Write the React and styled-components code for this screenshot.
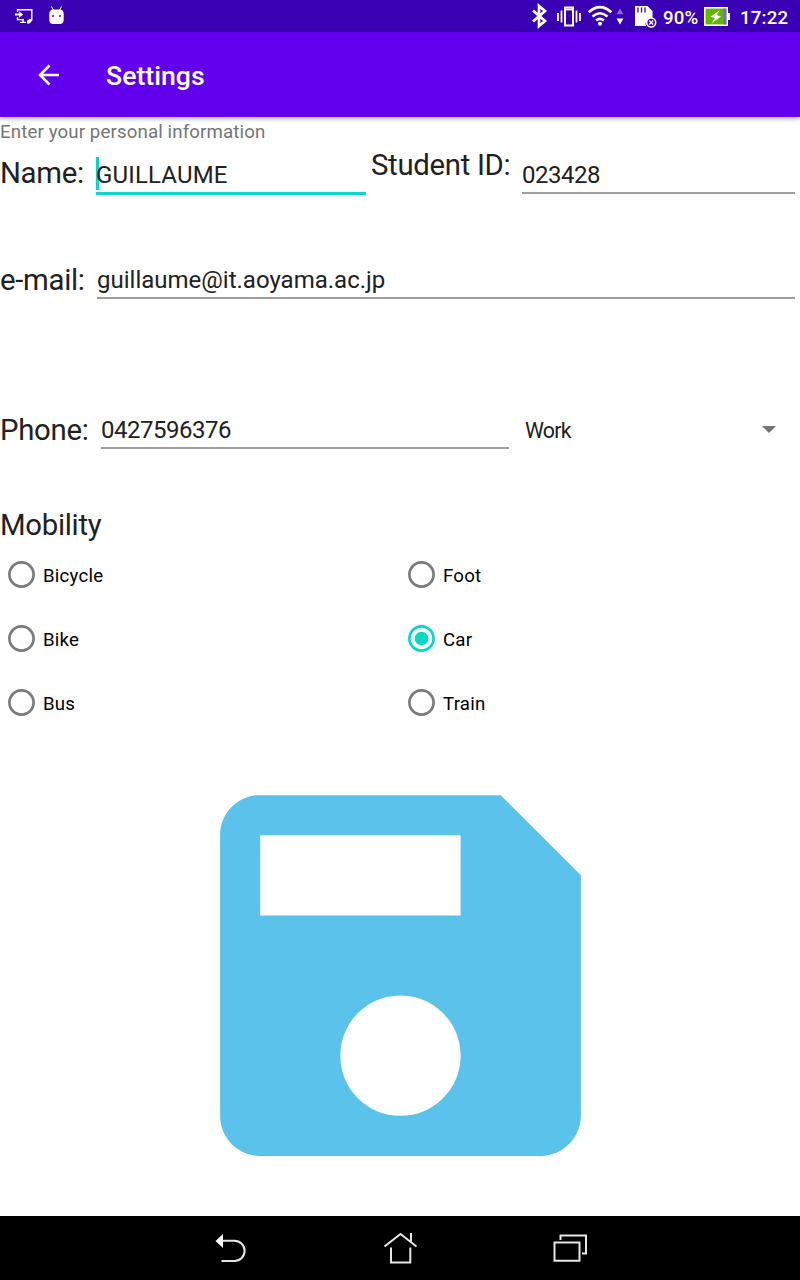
import React from "react";
import styled, { createGlobalStyle } from "styled-components";

const GlobalStyle = createGlobalStyle`
  * { box-sizing: border-box; }
  body { margin: 0; background: #fff; font-family: Roboto, "Noto Sans", sans-serif; }
`;

const Screen = styled.div`
  width: 800px;
  height: 1280px;
  display: flex;
  flex-direction: column;
  overflow: hidden;
  background: #fff;
`;

const StatusBar = styled.header`
  height: 32px;
  flex: none;
  display: flex;
  align-items: center;
  justify-content: space-between;
  padding: 0 11px 0 14px;
  background: #3a00b4;
  color: #fff;
`;

const StatusGroup = styled.div`
  display: flex;
  align-items: center;
  height: 32px;
`;

const StatusIcon = styled.svg`
  display: block;
  flex: none;
  height: 32px;
  width: ${(p) => p.$w}px;
  margin-right: ${(p) => p.$gap || 0}px;
`;

const StatusText = styled.span`
  font-size: 18.67px;
  font-weight: 500;
  line-height: 36px;
  height: 32px;
  width: ${(p) => p.$w}px;
  letter-spacing: 0.2px;
  white-space: nowrap;
`;

const AppBar = styled.div`
  height: 85px;
  flex: none;
  display: flex;
  align-items: center;
  padding-left: 37px;
  background: #6200ee;
  color: #fff;
  box-shadow: 0 1px 5px rgba(0, 0, 0, 0.4);
  z-index: 1;
`;

const BackIcon = styled.svg`
  width: 24px;
  height: 24px;
  margin: 0 45px 0 0;
`;

const Title = styled.h1`
  margin: 0;
  font-size: 26.67px;
  line-height: 34px;
  font-weight: 500;
  padding-top: 2px;
`;

const Form = styled.main`
  flex: 1;
  min-height: 0;
  display: flex;
  flex-direction: column;
`;

const Hint = styled.p`
  margin: 0;
  flex: none;
  height: 29px;
  font-size: 18.67px;
  line-height: 31px;
  letter-spacing: 0.13px;
  color: #757575;
`;

const Row = styled.div`
  display: flex;
  flex: none;
  align-items: flex-start;
  height: ${(p) => p.$h}px;
`;

const Label = styled.label`
  font-size: 29.33px;
  line-height: 40px;
  letter-spacing: -0.3px;
  color: #212121;
  white-space: nowrap;
  width: ${(p) => p.$w}px;
  margin-top: ${(p) => p.$top || 0}px;
`;

const Field = styled.div`
  display: flex;
  width: ${(p) => p.$w}px;
  height: ${(p) => (p.$focused ? 49 : 48)}px;
  margin-right: ${(p) => p.$gap || 0}px;
  border-bottom: ${(p) => (p.$focused ? "3px solid #0cd9c8" : "2px solid #9e9e9e")};
  font-size: 24px;
  line-height: 58px;
  letter-spacing: ${(p) => p.$tracking || 0}px;
  color: #212121;
  white-space: nowrap;
`;

const Caret = styled.span`
  flex: none;
  width: 3px;
  height: 33px;
  margin: 11px -3px 0 0;
  background: #03dac5;
`;

const Spinner = styled.div`
  flex: 1;
  height: 58px;
  display: flex;
  align-items: center;
  justify-content: space-between;
  padding-right: 24px;
  font-size: 21.33px;
  letter-spacing: -0.75px;
  color: #212121;
`;

const SpinnerText = styled.span`
  line-height: 26px;
  padding-top: 1px;
`;

const Arrow = styled.svg`
  width: 14px;
  height: 8px;
`;

const RadioGrid = styled.div`
  display: grid;
  flex: none;
  grid-template-columns: 400px 400px;
  grid-auto-rows: 64px;
  height: 192px;
`;

const RadioItem = styled.label`
  display: flex;
  align-items: center;
  padding-left: 8px;
  font-size: 18.67px;
  line-height: 24px;
  letter-spacing: 0.2px;
  color: #000;
`;

const RadioMark = styled.svg`
  width: 27px;
  height: 27px;
  margin: 1px 8px 0 0;
`;

const RadioText = styled.span`
  padding-top: 3px;
`;

const SaveButton = styled.button`
  display: block;
  flex: none;
  border: 0;
  padding: 0;
  margin: 1.4px auto 0;
  background: none;
  width: 481px;
  height: 481px;
`;

const NavBar = styled.nav`
  height: 64px;
  flex: none;
  display: flex;
  justify-content: center;
  gap: 130px;
  background: #000;
  z-index: 1;
`;

const NavIcon = styled.svg`
  width: 40px;
  height: 64px;
  fill: none;
  stroke: #e6e6e6;
  stroke-width: 2;
`;

function Radio({ label, checked }) {
  const color = checked ? "#03dac5" : "#7b7b7b";
  return (
    <RadioItem>
      <RadioMark viewBox="0 0 27 27">
        <circle cx="13.5" cy="13.5" r="12.1" fill="none" stroke={color} strokeWidth="2.7" />
        {checked && <circle cx="13.5" cy="13.5" r="6.8" fill={color} />}
      </RadioMark>
      <RadioText>{label}</RadioText>
    </RadioItem>
  );
}

const options = ["Bicycle", "Foot", "Bike", "Car", "Bus", "Train"];

export default function App() {
  return (
    <Screen>
      <GlobalStyle />
      <StatusBar>
        <StatusGroup>
          <StatusIcon $w={20} $gap={14} viewBox="14 0 20 32">
            <path d="M17.5 12V9.8h14.3v9.8h-1.5M17.5 17v2.6h6.5M20 22.4h6M23 20v2" fill="none" stroke="#fff" strokeWidth="1.4" />
            <path d="M15 13.4h4v-2.2l4.2 3.3-4.2 3.3v-2.2h-4z" fill="#fff" />
            <path d="M27 20.8l3.2-2.4.4 1.6 1.8.1-2 2.9-3 1z" fill="#fff" />
          </StatusIcon>
          <StatusIcon $w={17} viewBox="48 0 17 32">
            <path d="M51.5 6.5l2 4M61.5 6.5l-2 4" stroke="#fff" strokeWidth="1" />
            <path d="M49.3 14q0-4.5 4-4.5h6.4q4 0 4 4.5v6q0 4-4 4h-6.4q-4 0-4-4z" fill="#fff" />
            <circle cx="53" cy="16" r="1" fill="#3a00b4" />
            <circle cx="60" cy="16" r="1" fill="#3a00b4" />
          </StatusIcon>
        </StatusGroup>
        <StatusGroup>
          <StatusIcon $w={133} viewBox="530 0 133 32">
            <path d="M533 10.5l12 10.5-6 5V6l6 5-12 10.5" fill="none" stroke="#fff" strokeWidth="2.7" />
            <g fill="none" stroke="#fff">
              <rect x="565" y="7.5" width="8" height="18" strokeWidth="2" />
              <path d="M564 9.5h10" strokeWidth="1.8" />
              <path d="M561.5 10.5v12M576.5 10.5v12" strokeWidth="1.8" />
              <path d="M558 13v8M580 13v8" strokeWidth="1.8" />
            </g>
            <g fill="none" stroke="#fff" strokeWidth="2.6">
              <path d="M588.7 12.3q11.3-10.2 22.6 0" />
              <path d="M592.5 16.5q7.5-6.5 15 0" />
              <path d="M596.2 20.5q3.8-3.2 7.6 0" />
            </g>
            <circle cx="600" cy="23.7" r="2" fill="#fff" />
            <path d="M616.5 14.3l3.5-5.8 3.5 5.8z" fill="#8c66d2" />
            <path d="M616.5 18.5h7l-3.5 6z" fill="#fff" />
            <path d="M635 6h12.5l5 5v8.5a5 5 0 0 0-6.5 6.5h-11z" fill="#fff" />
            <path d="M638 7.5v5M641.5 7.5v5M645 7.5v5" stroke="#3a00b4" strokeWidth="1.3" />
            <circle cx="651.2" cy="22.5" r="4.5" fill="#3a00b4" stroke="#fff" strokeWidth="1.5" />
            <path d="M649.2 20.5l4 4M653.2 20.5l-4 4" stroke="#fff" strokeWidth="1.5" />
          </StatusIcon>
          <StatusText $w={40}>90%</StatusText>
          <StatusIcon $w={28} $gap={9} viewBox="703 0 28 32">
            <rect x="704.8" y="7.8" width="22.4" height="17.4" fill="#5cb800" stroke="#fff" strokeWidth="1.6" />
            <path d="M723.5 8.6h2.9v15.8h-2.9z" fill="#8a63d0" />
            <path d="M728 13h2v7h-2z" fill="#fff" />
            <path d="M720 10l-9.5 6.8 4.3 1.4-3.2 5 9.4-6.8-4.3-1.5z" fill="#fff" />
          </StatusIcon>
          <StatusText $w={49}>17:22</StatusText>
        </StatusGroup>
      </StatusBar>

      <AppBar>
        <BackIcon viewBox="0 0 24 24">
          <path d="M22 12H3M12.5 2.5L3 12l9.5 9.5" fill="none" stroke="#fff" strokeWidth="2.5" />
        </BackIcon>
        <Title>Settings</Title>
      </AppBar>

      <Form>
        <Hint>Enter your personal information</Hint>
        <Row $h={105}>
          <Label $w={96} $top={7}>Name:</Label>
          <Field $w={270} $gap={5} $tracking={0.17} $focused>
            <Caret />
            GUILLAUME
          </Field>
          <Label $w={151} $top={-1}>Student ID:</Label>
          <Field $w={273} $tracking={-0.48}>023428</Field>
        </Row>
        <Row $h={150}>
          <Label $w={97} $top={9}>e-mail:</Label>
          <Field $w={698}>guillaume@it.aoyama.ac.jp</Field>
        </Row>
        <Row $h={104}>
          <Label $w={101} $top={9}>Phone:</Label>
          <Field $w={408} $gap={16} $tracking={-0.5}>0427596376</Field>
          <Spinner>
            <SpinnerText>Work</SpinnerText>
            <Arrow viewBox="0 0 14 8">
              <path d="M0 0h14L7 7z" fill="#757575" />
            </Arrow>
          </Spinner>
        </Row>
        <Row $h={37}>
          <Label>Mobility</Label>
        </Row>
        <RadioGrid>
          {options.map((name) => (
            <Radio key={name} label={name} checked={name === "Car"} />
          ))}
        </RadioGrid>
        <SaveButton aria-label="Save">
          <svg width="481" height="481" viewBox="0 0 24 24" display="block">
            <path
              fill="#5bc2eb"
              d="M17 3H5c-1.11 0-2 .9-2 2v14c0 1.1.89 2 2 2h14c1.1 0 2-.9 2-2V7l-4-4zm-5 16c-1.66 0-3-1.34-3-3s1.34-3 3-3 3 1.34 3 3-1.34 3-3 3zm3-10H5V5h10v4z"
            />
          </svg>
        </SaveButton>
      </Form>

      <NavBar>
        <NavIcon viewBox="210 0 40 64">
          <path d="M222 24.7h12.5a10 10 0 0 1 0 20.3H221.5" />
          <path d="M215.5 25l7.5-7v14z" fill="#fff" stroke="none" />
        </NavIcon>
        <NavIcon viewBox="380 0 40 64">
          <path d="M384.5 30.5L400.5 18l16 12.5M411 17v9M391 31.5v15h19.3v-15" />
        </NavIcon>
        <NavIcon viewBox="550 0 40 64">
          <path d="M554.5 26.5h25v18.3h-25zM560.5 24v-4.5H586v18h-4" />
        </NavIcon>
      </NavBar>
    </Screen>
  );
}
